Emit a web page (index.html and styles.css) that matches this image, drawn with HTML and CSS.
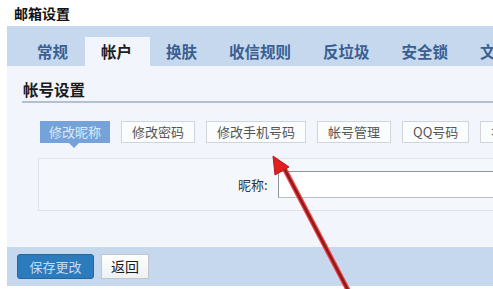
FILE: index.html
```html
<!DOCTYPE html>
<html lang="zh">
<head>
<meta charset="utf-8">
<link rel="stylesheet" href="styles.css">
</head>
<body>
<div class="title">邮箱设置</div>
<div class="panel">
  <div class="tabs">
    <div class="tab">常规</div>
    <div class="tab active">帐户</div>
    <div class="tab">换肤</div>
    <div class="tab">收信规则</div>
    <div class="tab">反垃圾</div>
    <div class="tab">安全锁</div>
    <div class="tab">文件夹</div>
  </div>
  <div class="content">
    <div class="heading">帐号设置</div>
    <div class="subtabs">
      <div class="sub on">修改昵称</div>
      <div class="sub">修改密码</div>
      <div class="sub">修改手机号码</div>
      <div class="sub">帐号管理</div>
      <div class="sub">QQ号码</div>
      <div class="sub">补充信息</div>
    </div>
    <div class="box">
      <span class="label">昵称:</span>
      <div class="input"></div>
    </div>
  </div>
  <div class="footer">
    <div class="btn save">保存更改</div>
    <div class="btn back">返回</div>
  </div>
</div>
<svg class="arrow" width="493" height="289" viewBox="0 0 493 289">
  <line x1="349" y1="292" x2="283" y2="166" stroke="#f04848" stroke-width="5" stroke-linecap="round"/>
  <line x1="349" y1="292" x2="283" y2="166" stroke="#8e1a1a" stroke-width="2.6" stroke-linecap="round"/>
  <polygon points="273,156 289,167 275,175" fill="#e01f1f" stroke="#c01818" stroke-width="1"/>
</svg>
</body>
</html>
```
FILE: styles.css
```css
* { box-sizing: border-box; }
html, body { margin: 0; padding: 0; }
body {
  width: 493px;
  height: 289px;
  overflow: hidden;
  background: #ffffff;
  font-family: "Noto Sans CJK SC", "Noto Sans", sans-serif;
  position: relative;
}
.title {
  height: 26px;
  padding-left: 14px;
  font-size: 14px;
  font-weight: bold;
  line-height: 26px;
  color: #111;
}
.panel {
  margin-left: 7px;
  background: #f2f5fb;
  height: 260px;
}
.tabs {
  height: 40px;
  background: #c5d8ee;
  display: flex;
  align-items: flex-end;
  padding-left: 14px;
  white-space: nowrap;
  overflow: hidden;
}
.tab {
  flex: none;
  height: 29px;
  line-height: 29px;
  padding: 0 16px;
  font-size: 15.5px;
  font-weight: bold;
  color: #3a5f92;
}
.tab.active {
  background: #f2f5fb;
  color: #1c1c1c;
  margin-left: 1px;
  padding-right: 18px;
}
.content {
  padding: 0 0 0 15px;
  height: 181px;
}
.heading {
  height: 37px;
  line-height: 46px;
  font-size: 15.5px;
  font-weight: bold;
  color: #1a1a1a;
  border-bottom: 2px solid #b2c0cf;
  padding-left: 1px;
}
.subtabs {
  display: flex;
  gap: 11px;
  margin: 18px 0 0 18px;
  white-space: nowrap;
}
.sub {
  flex: none;
  position: relative;
  height: 22px;
  line-height: 20px;
  padding: 0 10px;
  font-size: 13px;
  color: #555;
  background: #fbfcfe;
  border: 1px solid #cfd5dc;
}
.sub.on {
  background: #74a2d9;
  border-color: #74a2d9;
  color: #dde9f8;
  padding: 0 8px;
}
.sub.on::after {
  content: "";
  position: absolute;
  left: 28px;
  top: 21px;
  border-left: 5px solid transparent;
  border-right: 5px solid transparent;
  border-top: 5px solid #74a2d9;
}
.box {
  margin: 15px 0 0 16px;
  height: 53px;
  border: 1px solid #dde3ea;
  border-right: none;
  background: #f4f7fc;
  display: flex;
  align-items: center;
  padding-left: 199px;
}
.label {
  flex: none;
  width: 40px;
  font-size: 13px;
  color: #333;
}
.input {
  flex: 1;
  height: 27px;
  background: #ffffff;
  border: 1px solid #b8bec6;
  border-top-color: #8e959e;
  border-left-color: #8e959e;
  border-right: none;
}
.footer {
  margin-top: 0;
  height: 39px;
  background: #c5d8ee;
  display: flex;
  align-items: center;
  gap: 7px;
  padding-left: 10px;
}
.btn {
  height: 25px;
  line-height: 23px;
  font-size: 13px;
  text-align: center;
}
.save {
  width: 77px;
  background: #2b7bbd;
  border: 1px solid #22679f;
  border-radius: 3px;
  color: #c3dcf2;
}
.back {
  width: 48px;
  background: linear-gradient(#ffffff, #eef0f2);
  border: 1px solid #c2c6cb;
  color: #1a1a1a;
  font-size: 14px;
}
.arrow {
  position: absolute;
  left: 0;
  top: 0;
  pointer-events: none;
}
```
